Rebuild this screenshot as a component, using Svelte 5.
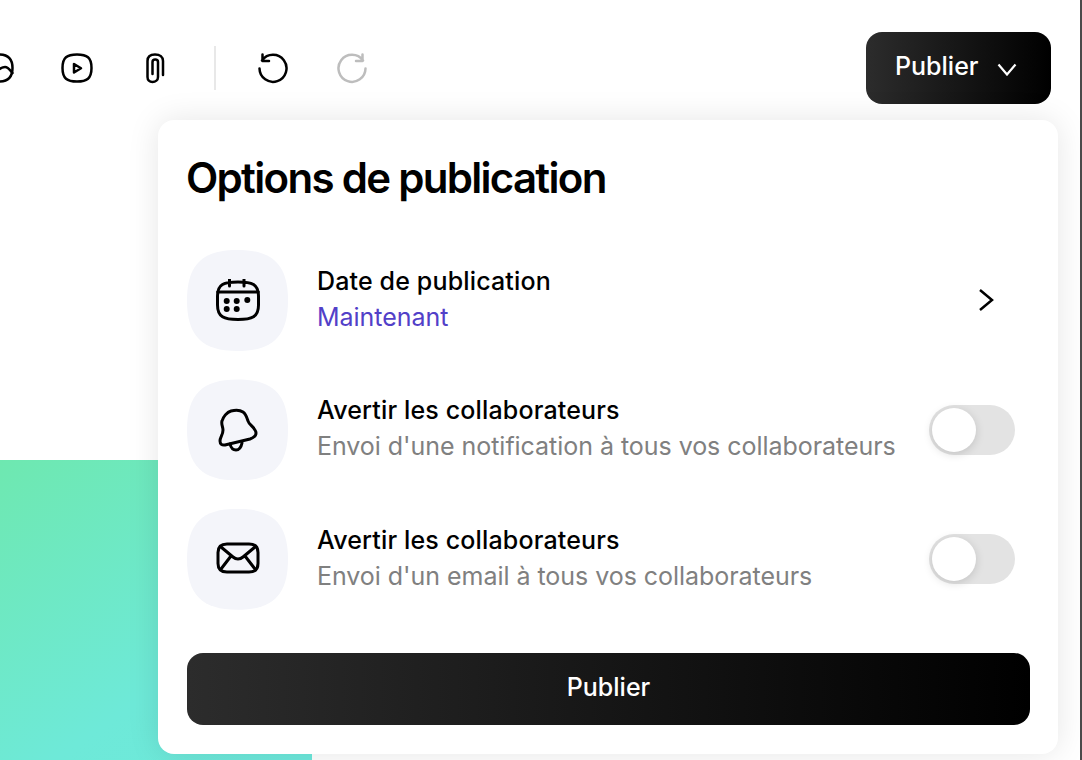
<script>
	const rows = [
		{ icon: 'calendar', title: 'Date de publication', sub: 'Maintenant', accent: true },
		{ icon: 'bell', title: 'Avertir les collaborateurs', sub: "Envoi d'une notification à tous vos collaborateurs" },
		{ icon: 'mail', title: 'Avertir les collaborateurs', sub: "Envoi d'un email à tous vos collaborateurs" }
	];
</script>

<div class="page">
	<header class="toolbar">
		<div class="tools">
			<svg class="ico" viewBox="0 0 32 32"><path d="M16 2.500c9 0 13.500 4 13.500 13.500S25 29.500 16 29.500 2.500 25 2.500 16 7 2.500 16 2.500Z" /><path d="M10 25c3-5 8-10 12-10 3 0 5 3 7.500 6" /></svg>
			<svg class="ico" viewBox="0 0 32 32"><path d="M16 2.500c10 0 14.500 3 14.500 13.500S26 29.500 16 29.500 1.500 26.500 1.500 16 6 2.500 16 2.500Z" /><path d="M13 12v8.500l7-4.200-7-4.300Z" /></svg>
			<svg class="ico" viewBox="0 0 32 32"><path d="M24 23V9c0-4-3-6.500-8-6.500S8.500 5 8.500 9v16c0 3 2 5 5 5s5.500-2 5.500-5V10c0-1.500-1-2.500-2.800-2.500s-2.700 1-2.700 2.500v12" /></svg>
			<span class="sep"></span>
			<svg class="ico" viewBox="0 0 32 32"><path d="M5 8.500A13.500 13.500 0 1 1 2.500 16.500M5.500 2.500v6.500H12" /></svg>
			<svg class="ico off" viewBox="0 0 32 32"><path d="M27 8.500A13.500 13.500 0 1 0 29.500 16.500M26.500 2.500v6.500H20" /></svg>
		</div>
		<button class="publish">
			<span>Publier</span>
			<svg viewBox="0 0 20 13"><path d="M1.500 1.500 10 11.500l8.500-10" /></svg>
		</button>
	</header>

	<div class="canvas">
		<div class="block"></div>
	</div>

	<section class="popover">
		<h2>Options de publication</h2>
		<ul>
			{#each rows as r, i}
				<li>
					<div class="badge">
						{#if r.icon === 'calendar'}
							<svg viewBox="0 0 44 44">
								<path class="st" d="M22 3c14 0 20.500 2 20.500 14v9c0 12-6.500 14.500-20.500 14.500S1.500 38 1.500 26v-9C1.500 5 8 3 22 3ZM1.500 13h41M13.500 0v7M28 0v7" />
								<circle cx="10.700" cy="22" r="3" /><circle cx="20.700" cy="22" r="3" /><circle cx="31.300" cy="21" r="3" />
								<circle cx="10.700" cy="30" r="3" /><circle cx="20.700" cy="30" r="3" />
							</svg>
						{:else if r.icon === 'bell'}
							<svg viewBox="0 0 44 44">
								<path class="st" d="M15 3c4-1 9-1 12 1 3 2 4 6 5 9 1 4 8 7 8 12 0 3-3 5-6 6-8 2-17 4-25 6-3 .5-5-1-5-4 0-4 3-6 3-11 0-3-2-6-1-9 1-4 5-9 9-10Z" />
								<path class="st" d="M14 36c1 4 3 6 6 6s5-2 6-7" />
							</svg>
						{:else}
							<svg viewBox="0 0 44 44">
								<path class="st" d="M11 7h22c6 0 9 3 9 8.500v11c0 5.500-3 8.500-9 8.500H11c-6 0-9-3-9-8.500v-11C2 10 5 7 11 7Z" />
								<path class="st" d="M5 10l12 10c3 2.500 7 2.500 10 0l12-10M15 19 5 32M29 19l10 13" />
							</svg>
						{/if}
					</div>
					<div class="text">
						<strong>{r.title}</strong>
						<span class:accent={r.accent}>{r.sub}</span>
					</div>
					{#if i === 0}
						<svg class="chev" viewBox="0 0 16 24"><path d="M2 2l12 10L2 22" /></svg>
					{:else}
						<div class="toggle"><span></span></div>
					{/if}
				</li>
			{/each}
		</ul>
		<button class="submit">Publier</button>
	</section>
</div>

<style>
	:global(body) {
		margin: 0;
		background: #fff;
	}
	.page {
		position: relative;
		width: 1082px;
		height: 760px;
		overflow: hidden;
		box-sizing: border-box;
		border-right: 2px solid #4a4a4a;
		font-family: Inter, "Liberation Sans", sans-serif;
	}
	.toolbar {
		display: flex;
		justify-content: space-between;
		align-items: center;
		height: 72px;
		padding: 32px 29px 0 0;
	}
	.tools {
		display: flex;
		align-items: center;
		margin-left: -17px;
		gap: 46px;
	}
	.ico {
		flex: none;
		width: 32px;
		height: 32px;
		fill: none;
		stroke: #000;
		stroke-width: 2.500;
		stroke-linecap: round;
		stroke-linejoin: round;
	}
	.ico.off {
		margin-left: 1px;
		stroke: #bdbdbd;
	}
	.sep {
		width: 2px;
		height: 44px;
		background: #e8e8e8;
		margin: 0 -5px 0 -3px;
	}
	.publish {
		display: flex;
		align-items: center;
		gap: 19px;
		width: 185px;
		height: 72px;
		padding: 0 32px 0 29px;
		border: 0;
		border-radius: 16px;
		background: linear-gradient(90deg, #2c2c2c, #000);
		color: #fff;
		font: 500 25px Inter, sans-serif;
	}
	.publish span {
		margin-bottom: 4px;
	}
	.publish svg {
		width: 20px;
		height: 13px;
		margin-top: 2px;
		fill: none;
		stroke: #fff;
		stroke-width: 2.200;
	}
	.canvas {
		padding-top: 356px;
	}
	.block {
		width: 312px;
		height: 300px;
		background: linear-gradient(145deg, #6ee8b0, #6ee9d8 65%, #6de8dc);
	}
	.popover {
		position: absolute;
		left: 158px;
		top: 120px;
		width: 900px;
		height: 634px;
		box-sizing: border-box;
		padding: 29px 28px 29px 29px;
		background: #fff;
		border-radius: 16px;
		box-shadow: 0 0 32px rgba(0, 0, 0, 0.1);
	}
	h2 {
		margin: 0 0 43px -1px;
		font-size: 42px;
		line-height: 58px;
		font-weight: 600;
		letter-spacing: -1.700px;
		color: #000;
	}
	ul {
		list-style: none;
		margin: 0;
		padding: 0;
		display: flex;
		flex-direction: column;
		gap: 28.400px;
	}
	li {
		display: flex;
		align-items: center;
		height: 101px;
	}
	.badge {
		display: flex;
		align-items: center;
		justify-content: center;
		flex: none;
		width: 101px;
		height: 101px;
		margin-right: 29px;
		background: #f4f5fa;
		clip-path: path('M50.500 0C86 0 101 15 101 50.500S86 101 50.500 101 0 86 0 50.500 15 0 50.500 0Z');
	}
	.badge svg {
		width: 44px;
		height: 44px;
	}
	.st {
		fill: none;
		stroke: #000;
		stroke-width: 3;
		stroke-linecap: round;
		stroke-linejoin: round;
	}
	.text {
		display: flex;
		flex-direction: column;
		flex: 1;
		gap: 6px;
		margin-bottom: 3px;
	}
	strong {
		font-size: 25px;
		line-height: 30px;
		font-weight: 500;
		letter-spacing: 0.150px;
		color: #000;
	}
	.text span {
		font-size: 25px;
		line-height: 30px;
		letter-spacing: -0.040px;
		color: #808080;
	}
	.text span.accent {
		color: #5240c8;
	}
	.chev {
		width: 16px;
		height: 24px;
		margin: 0 36px 2px 0;
		fill: none;
		stroke: #000;
		stroke-width: 2.500;
	}
	.toggle {
		display: flex;
		align-items: center;
		width: 86px;
		height: 50px;
		margin-right: 15px;
		padding: 0 3px;
		box-sizing: border-box;
		border-radius: 25px;
		background: #e3e3e3;
	}
	.toggle span {
		width: 44px;
		height: 44px;
		border-radius: 50%;
		background: #fff;
		box-shadow: 0 2px 10px rgba(0, 0, 0, 0.15);
	}
	.submit {
		display: block;
		width: 843px;
		height: 72px;
		margin-top: 43px;
		padding-bottom: 4px;
		border: 0;
		border-radius: 16px;
		background: linear-gradient(90deg, #2c2c2c, #000);
		color: #fff;
		font: 500 25px Inter, sans-serif;
	}
</style>
